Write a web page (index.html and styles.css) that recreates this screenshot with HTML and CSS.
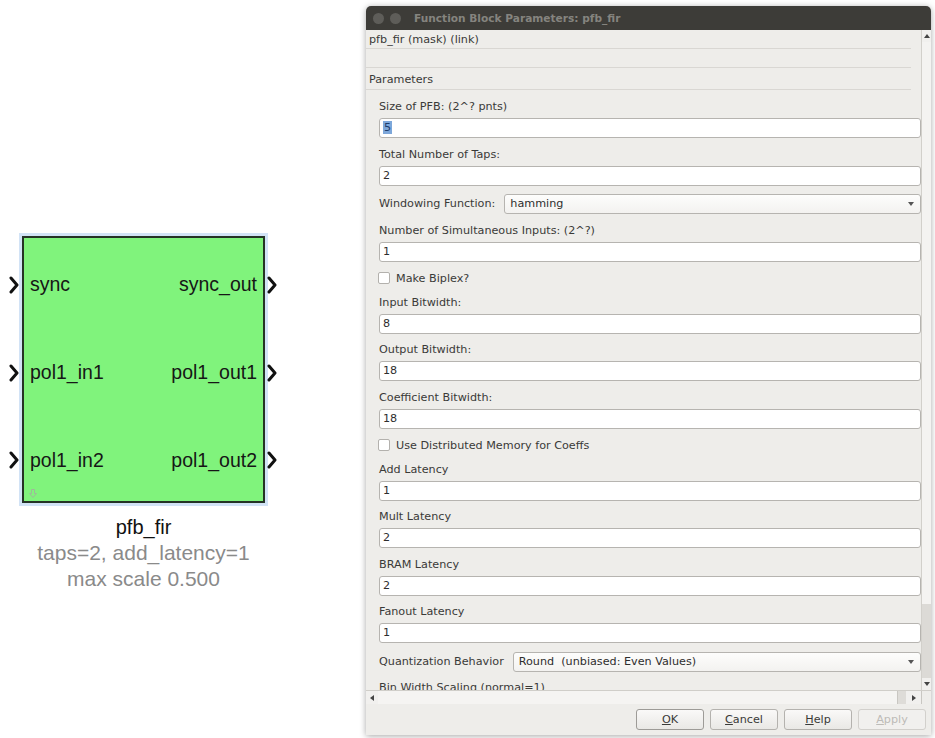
FILE: index.html
```html
<!DOCTYPE html>
<html lang="en">
<head>
<meta charset="utf-8">
<title>pfb_fir</title>
<link rel="stylesheet" href="styles.css">
</head>
<body>
<div class="screen">
  <section class="canvas">
    <div class="figure">
      <div class="block">
        <div class="port-row">
          <svg class="chev chev-in" viewBox="0 0 10 18"><path d="M2 2 L8 9 L2 16"/></svg>
          <span class="port">sync</span><span class="port">sync_out</span>
          <svg class="chev chev-out" viewBox="0 0 10 18"><path d="M2 2 L8 9 L2 16"/></svg>
        </div>
        <div class="port-row">
          <svg class="chev chev-in" viewBox="0 0 10 18"><path d="M2 2 L8 9 L2 16"/></svg>
          <span class="port">pol1_in1</span><span class="port">pol1_out1</span>
          <svg class="chev chev-out" viewBox="0 0 10 18"><path d="M2 2 L8 9 L2 16"/></svg>
        </div>
        <div class="port-row">
          <svg class="chev chev-in" viewBox="0 0 10 18"><path d="M2 2 L8 9 L2 16"/></svg>
          <span class="port">pol1_in2</span><span class="port">pol1_out2</span>
          <svg class="chev chev-out" viewBox="0 0 10 18"><path d="M2 2 L8 9 L2 16"/></svg>
        </div>
        <svg class="block-mark" viewBox="0 0 8 9"><path d="M2.5 0.5 H5.5 V4.5 H7.5 L4 8.5 L0.5 4.5 H2.5 Z"/></svg>
      </div>
      <div class="caption">
        <div class="name">pfb_fir</div>
        <div class="annot">taps=2, add_latency=1</div>
        <div class="annot">max scale 0.500</div>
      </div>
    </div>
  </section>

  <div class="dialog">
    <header class="titlebar">
      <span class="wbtn"></span><span class="wbtn"></span>
      <span class="title">Function Block Parameters: pfb_fir</span>
    </header>

    <div class="viewport">
      <div class="scroll">
        <div class="desc">pfb_fir (mask) (link)</div>
        <div class="desc blank"></div>
        <div class="desc heading">Parameters</div>

        <div class="params">
          <div class="param">
            <div class="label">Size of PFB: (2^? pnts)</div>
            <div class="field"><span class="sel">5</span></div>
          </div>
          <div class="param">
            <div class="label">Total Number of Taps:</div>
            <div class="field">2</div>
          </div>
          <div class="combo-row">
            <span class="combo-label">Windowing Function:</span>
            <div class="combo">hamming<span class="caret"></span></div>
          </div>
          <div class="param">
            <div class="label">Number of Simultaneous Inputs: (2^?)</div>
            <div class="field">1</div>
          </div>
          <div class="check-row">
            <span class="checkbox"></span><span>Make Biplex?</span>
          </div>
          <div class="param">
            <div class="label">Input Bitwidth:</div>
            <div class="field">8</div>
          </div>
          <div class="param">
            <div class="label">Output Bitwidth:</div>
            <div class="field">18</div>
          </div>
          <div class="param">
            <div class="label">Coefficient Bitwidth:</div>
            <div class="field">18</div>
          </div>
          <div class="check-row">
            <span class="checkbox"></span><span>Use Distributed Memory for Coeffs</span>
          </div>
          <div class="param">
            <div class="label">Add Latency</div>
            <div class="field">1</div>
          </div>
          <div class="param">
            <div class="label">Mult Latency</div>
            <div class="field">2</div>
          </div>
          <div class="param">
            <div class="label">BRAM Latency</div>
            <div class="field">2</div>
          </div>
          <div class="param">
            <div class="label">Fanout Latency</div>
            <div class="field">1</div>
          </div>
          <div class="combo-row">
            <span class="combo-label">Quantization Behavior</span>
            <div class="combo">Round&nbsp; (unbiased: Even Values)<span class="caret"></span></div>
          </div>
          <div class="param">
            <div class="label">Bin Width Scaling (normal=1)</div>
            <div class="field">1</div>
          </div>
        </div>
      </div>

      <div class="vscroll">
        <span class="vs-btn"><span class="tri-up"></span></span>
        <span class="vs-thumb"></span>
        <span class="vs-track"></span>
        <span class="vs-btn"><span class="tri-down"></span></span>
      </div>
    </div>

    <div class="hscroll">
      <span class="hs-btn"><span class="tri-left"></span></span>
      <span class="hs-thumb"></span>
      <span class="hs-track"></span>
      <span class="hs-btn hs-right"><span class="tri-right"></span></span>
      <span class="hs-corner"></span>
    </div>

    <div class="buttons">
      <button class="btn default"><u>O</u>K</button>
      <button class="btn"><u>C</u>ancel</button>
      <button class="btn"><u>H</u>elp</button>
      <button class="btn disabled"><u>A</u>pply</button>
    </div>
  </div>
</div>
</body>
</html>
```

FILE: styles.css
```css
html, body {
  margin: 0;
  padding: 0;
  background: #ffffff;
}

.screen {
  display: flex;
  width: 935px;
  height: 738px;
  overflow: hidden;
}

/* ---------- diagram canvas ---------- */
.canvas {
  width: 366px;
  flex: none;
  padding: 236px 0 0 22px;
  box-sizing: border-box;
  font-family: "Liberation Sans", Arial, sans-serif;
}

.figure {
  width: 243px;
}

.block {
  position: relative;
  width: 243px;
  height: 267px;
  box-sizing: border-box;
  background: #80f37c;
  border: 2px solid #253325;
  box-shadow: 0 0 0 3px #d2e3f6;
  display: flex;
  flex-direction: column;
}

.port-row {
  position: relative;
  flex: 1;
  display: flex;
  align-items: center;
  justify-content: space-between;
  padding: 6px 6px 0;
}

.port {
  font-size: 19.5px;
  color: #161616;
}

.chev {
  position: absolute;
  top: 50%;
  width: 10px;
  height: 18px;
  margin-top: -6px;
}

.chev path {
  fill: none;
  stroke: #111;
  stroke-width: 3;
  stroke-linejoin: round;
  stroke-linecap: round;
}

.chev-in { left: -15px; }
.chev-out { right: -14px; }

.block-mark {
  position: absolute;
  left: 5px;
  bottom: 3px;
  width: 8px;
  height: 9px;
}

.block-mark path {
  fill: none;
  stroke: #9fb89a;
  stroke-width: 1;
}

.caption {
  margin-top: 11px;
  text-align: center;
}

.caption .name {
  font-size: 20px;
  line-height: 26px;
  color: #111;
}

.caption .annot {
  font-size: 21px;
  line-height: 26px;
  color: #8a8a8a;
}

/* ---------- parameter dialog ---------- */
.dialog {
  width: 565px;
  height: 729px;
  margin-top: 6px;
  flex: none;
  display: flex;
  flex-direction: column;
  background: #eeedea;
  border-radius: 5px 5px 0 0;
  box-shadow: 0 1px 6px rgba(0, 0, 0, 0.35);
  font-family: "DejaVu Sans", Verdana, sans-serif;
  font-size: 11.2px;
  color: #3a3a38;
  overflow: hidden;
}

.titlebar {
  height: 24px;
  flex: none;
  display: flex;
  align-items: center;
  padding-left: 7px;
  background: #3d3c38;
}

.wbtn {
  width: 11px;
  height: 11px;
  border-radius: 50%;
  background: #5e5d59;
  margin-right: 6px;
}

.title {
  margin-left: 7px;
  font-weight: bold;
  font-size: 10.6px;
  color: #85847f;
}

.viewport {
  height: 660px;
  flex: none;
  display: flex;
}

.scroll {
  flex: 1;
  overflow: hidden;
}

.desc {
  height: 18px;
  line-height: 18px;
  padding-left: 3px;
  margin-right: 10px;
  border-bottom: 1px solid #d9d7d3;
}

.desc:first-child {
  line-height: 20px;
}

.desc.blank {
  height: 18px;
}

.desc.heading {
  height: 18px;
  padding-top: 3px;
}

.params {
  display: flex;
  flex-direction: column;
  gap: 4.5px;
  padding: 5px 0 0 13px;
}

.label {
  height: 23px;
  line-height: 23px;
}

.field {
  height: 20px;
  box-sizing: border-box;
  border: 1px solid #b6b4b0;
  border-radius: 3px;
  background: #ffffff;
  line-height: 18px;
  padding-left: 3px;
  color: #2e2e2e;
}

.sel {
  background: #7da7da;
  color: #1d3d6b;
  padding: 0 1px;
}

.combo-row {
  height: 24px;
  display: flex;
  align-items: flex-end;
  gap: 9px;
}

.combo-label {
  line-height: 20px;
}

.combo {
  position: relative;
  flex: 1;
  height: 20px;
  box-sizing: border-box;
  border: 1px solid #b6b4b0;
  border-radius: 3px;
  background: linear-gradient(#fdfdfc, #f3f2f0);
  line-height: 18px;
  padding-left: 5px;
  color: #2e2e2e;
}

.caret {
  position: absolute;
  right: 6px;
  top: 7px;
  border-left: 3.5px solid transparent;
  border-right: 3.5px solid transparent;
  border-top: 4px solid #555;
}

.check-row {
  height: 20px;
  display: flex;
  align-items: center;
  gap: 6px;
  padding-top: 4px;
  box-sizing: border-box;
}

.checkbox {
  width: 12px;
  height: 12px;
  margin-left: -1px;
  box-sizing: border-box;
  border: 1px solid #b3b1ad;
  border-radius: 2px;
  background: #ffffff;
}

/* scroll bars */
.vscroll {
  width: 9px;
  flex: none;
  display: flex;
  flex-direction: column;
  background: #dcdad6;
  border-left: 1px solid #d2d0cb;
}

.vs-btn {
  height: 12px;
  flex: none;
  display: flex;
  align-items: center;
  justify-content: center;
  background: #f1f0ee;
}

.vs-thumb {
  height: 562px;
  flex: none;
  background: #f4f3f1;
}

.vs-track {
  flex: 1;
}

.tri-up {
  border-left: 3px solid transparent;
  border-right: 3px solid transparent;
  border-bottom: 4px solid #444;
}

.tri-down {
  border-left: 3px solid transparent;
  border-right: 3px solid transparent;
  border-top: 4px solid #444;
}

.tri-left {
  border-top: 3px solid transparent;
  border-bottom: 3px solid transparent;
  border-right: 4px solid #444;
}

.tri-right {
  border-top: 3px solid transparent;
  border-bottom: 3px solid transparent;
  border-left: 4px solid #444;
}

.hscroll {
  height: 14px;
  flex: none;
  display: flex;
  box-sizing: border-box;
  border-top: 1px solid #d0cec9;
  background: #dedcd8;
}

.hs-btn {
  width: 12px;
  flex: none;
  display: flex;
  align-items: center;
  justify-content: center;
  background: #f1f0ee;
}

.hs-thumb {
  flex: 1;
  background: #f5f4f2;
}

.hs-track {
  width: 8px;
  flex: none;
  border-left: 1px solid #c9c7c2;
}

.hs-right {
  width: 15px;
  border-right: 1px solid #c9c7c2;
}

.hs-corner {
  width: 9px;
  flex: none;
  background: #eeedea;
}

/* dialog buttons */
.buttons {
  flex: 1;
  display: flex;
  justify-content: flex-end;
  align-items: flex-start;
  gap: 6px;
  padding: 5px 5px 0 0;
}

.btn {
  width: 68px;
  height: 21px;
  box-sizing: border-box;
  border: 1px solid #b4b2ae;
  border-radius: 3px;
  background: linear-gradient(#faf9f8, #e9e8e5);
  font-family: "DejaVu Sans", Verdana, sans-serif;
  font-size: 11.2px;
  color: #3a3a38;
  padding: 0;
}

.btn.default {
  border-color: #9d9b97;
}

.btn.disabled {
  color: #bdbbb7;
  background: #f1f0ee;
  border-color: #d2d0cc;
}
```
